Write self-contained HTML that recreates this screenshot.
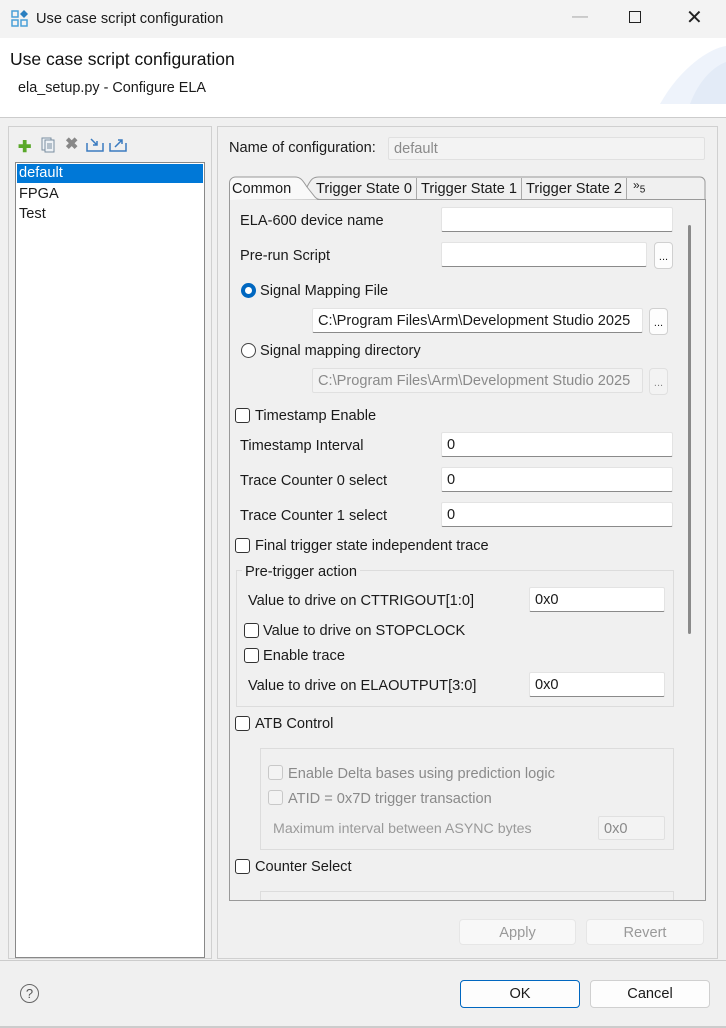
<!DOCTYPE html><html><head><style>
*{box-sizing:border-box}
body{margin:0;width:726px;height:1028px;background:#f0f0f0;font-family:"Liberation Sans",sans-serif;font-size:14.6px;color:#1a1a1a;position:relative;overflow:hidden}
.a{position:absolute;white-space:nowrap}
.in{position:absolute;background:#fff;border:1px solid #e3e3e3;border-bottom:1px solid #8a8a8a;border-radius:2px;padding:4px 5px;font-size:14.6px;line-height:16px;white-space:nowrap;overflow:hidden}
.dis{background:#f3f3f3;color:#8a8a8a;border-color:#e0e0e0}
.btn{position:absolute;background:#fdfdfd;border:1px solid #d0d0d0;border-radius:4px;text-align:center;font-size:14.6px}
.cb{position:absolute;width:15px;height:15px;border:1px solid #333;border-radius:3px;background:#fff}
.cbd{border-color:#c8c8c8;background:#f3f3f3}
.grp{position:absolute;border:1px solid #dcdcdc}
.g{color:#8a8a8a}
</style></head><body>
<div class="a" style="left:0;top:0;width:726px;height:38px;background:#f3f3f3"></div>
<svg class="a" style="left:11px;top:10px" width="18" height="18" viewBox="0 0 18 18"><rect x="1" y="1" width="6" height="6" fill="none" stroke="#4aa0d8" stroke-width="1.5"/><path d="M13 0l4 4-4 4-4-4z" fill="#2a7fc0"/><rect x="1" y="10" width="6" height="6" fill="none" stroke="#4aa0d8" stroke-width="1.5"/><rect x="10" y="10" width="6" height="6" fill="none" stroke="#4aa0d8" stroke-width="1.5"/></svg>
<div class="a" style="left:36px;top:11px;font-size:14.6px">Use case script configuration</div>
<div class="a" style="left:572px;top:8px;color:#aaa;font-size:16px">—</div>
<div class="a" style="left:629px;top:11px;width:12px;height:12px;border:1.5px solid #222"></div>
<div class="a" style="left:686px;top:5px;font-size:20px;color:#222">✕</div>
<div class="a" style="left:0;top:38px;width:726px;height:80px;background:#fff;border-bottom:1px solid #ccc"></div>
<svg class="a" style="left:640px;top:38px" width="86" height="66"><path d="M20 66 C40 30 70 10 86 8 L86 66Z" fill="#eef3fb"/><path d="M50 66 C60 40 75 28 86 24 L86 66Z" fill="#e3ebf7"/></svg>
<div class="a" style="left:10px;top:49px;font-size:17.5px;color:#111">Use case script configuration</div>
<div class="a" style="left:18px;top:80px;font-size:14.4px">ela_setup.py - Configure ELA</div>
<div class="grp" style="left:8px;top:126px;width:204px;height:833px;border-color:#d0d0d0"></div>
<div class="a" style="left:18px;top:137px;font-size:16px;color:#5aa82a;font-weight:bold">✚</div>
<svg class="a" style="left:41px;top:137px" width="15" height="16"><rect x="1" y="1" width="9" height="12" fill="#eef2f6" stroke="#7a8ea0"/><rect x="4" y="3" width="9" height="12" fill="#eef2f6" stroke="#7a8ea0"/><path d="M6 7h5M6 9h5M6 11h5" stroke="#7a8ea0"/></svg>
<div class="a" style="left:65px;top:134px;font-size:16px;color:#888;font-weight:bold">✖</div>
<svg class="a" style="left:86px;top:137px" width="18" height="15"><path d="M1 6v8h16V6" fill="none" stroke="#3a7bc0" stroke-width="1.5"/><path d="M5 2l6 6M11 4v4H7" fill="none" stroke="#3a7bc0" stroke-width="1.5"/></svg>
<svg class="a" style="left:109px;top:137px" width="18" height="15"><path d="M1 6v8h16V6" fill="none" stroke="#3a7bc0" stroke-width="1.5"/><path d="M6 10l7-7M9 3h4v4" fill="none" stroke="#3a7bc0" stroke-width="1.5"/></svg>
<div class="a" style="left:15px;top:162px;width:190px;height:796px;background:#fff;border:1px solid #888"></div>
<div class="a" style="left:17px;top:164px;width:186px;height:19px;background:#0078d7;color:#fff;padding:1px 2px">default</div>
<div class="a" style="left:19px;top:186px">FPGA</div>
<div class="a" style="left:19px;top:206px">Test</div>
<div class="grp" style="left:217px;top:126px;width:501px;height:833px;border-color:#d0d0d0"></div>
<div class="a" style="left:229px;top:140px">Name of configuration:</div>
<div class="in dis" style="left:388px;top:137px;width:317px;height:23px;border-bottom-color:#e0e0e0;padding-top:3px">default</div>
<div class="a" style="left:229px;top:199px;width:477px;height:702px;border:1px solid #999;border-top:none"></div>
<svg class="a" style="left:229px;top:175px" width="477" height="25"><path d="M0 24.5H88M88 24.5H477" stroke="#999"/><path d="M0.5 25V8a6 6 0 0 1 6-6H66c6 0 8 4 12 10l8 10c2 2 3 2.5 6 2.5" fill="#f9f9f9" stroke="#999"/><path d="M78 12c4-8 6-10 12-10H471a5 5 0 0 1 5 5V25" fill="none" stroke="#999"/><path d="M187.5 3v21M292.5 3v21M397.5 3v21" stroke="#aaa"/></svg>
<div class="a" style="left:232px;top:181px">Common</div>
<div class="a" style="left:316px;top:181px">Trigger State 0</div>
<div class="a" style="left:421px;top:181px">Trigger State 1</div>
<div class="a" style="left:526px;top:181px">Trigger State 2</div>
<div class="a" style="left:633px;top:178px;font-size:12px">»<sub style="font-size:10px">5</sub></div>
<div class="a" style="left:688px;top:225px;width:3px;height:409px;background:#8a8a8a;border-radius:2px"></div>
<div class="a" style="left:240px;top:213px">ELA-600 device name</div>
<div class="in" style="left:441px;top:207px;width:232px;height:25px"></div>
<div class="a" style="left:240px;top:248px">Pre-run Script</div>
<div class="in" style="left:441px;top:242px;width:206px;height:25px"></div>
<div class="btn" style="left:654px;top:242px;width:19px;height:27px;font-size:11px;line-height:28px">...</div>
<div class="a" style="left:241px;top:283px;width:15px;height:15px;border-radius:50%;background:#0067c0"><div style="margin:4px;width:7px;height:7px;border-radius:50%;background:#fff"></div></div>
<div class="a" style="left:260px;top:283px">Signal Mapping File</div>
<div class="in" style="left:312px;top:308px;width:331px;height:25px">C:\Program Files\Arm\Development Studio 2025</div>
<div class="btn" style="left:649px;top:308px;width:19px;height:27px;font-size:11px;line-height:28px">...</div>
<div class="a" style="left:241px;top:343px;width:15px;height:15px;border-radius:50%;border:1px solid #444;background:#fff"></div>
<div class="a" style="left:260px;top:343px">Signal mapping directory</div>
<div class="in dis" style="left:312px;top:368px;width:331px;height:25px">C:\Program Files\Arm\Development Studio 2025</div>
<div class="btn g" style="left:649px;top:368px;width:19px;height:27px;font-size:11px;line-height:28px;background:#f3f3f3;border-color:#e0e0e0">...</div>
<div class="cb" style="left:235px;top:408px"></div>
<div class="a" style="left:255px;top:408px">Timestamp Enable</div>
<div class="a" style="left:240px;top:438px">Timestamp Interval</div>
<div class="in" style="left:441px;top:432px;width:232px;height:25px">0</div>
<div class="a" style="left:240px;top:473px">Trace Counter 0 select</div>
<div class="in" style="left:441px;top:467px;width:232px;height:25px">0</div>
<div class="a" style="left:240px;top:508px">Trace Counter 1 select</div>
<div class="in" style="left:441px;top:502px;width:232px;height:25px">0</div>
<div class="cb" style="left:235px;top:538px"></div>
<div class="a" style="left:255px;top:538px">Final trigger state independent trace</div>
<div class="grp" style="left:236px;top:570px;width:438px;height:137px"></div>
<div class="a" style="left:242px;top:564px;background:#f0f0f0;padding:0 3px">Pre-trigger action</div>
<div class="a" style="left:248px;top:593px">Value to drive on CTTRIGOUT[1:0]</div>
<div class="in" style="left:529px;top:587px;width:136px;height:25px">0x0</div>
<div class="cb" style="left:244px;top:623px"></div>
<div class="a" style="left:263px;top:623px">Value to drive on STOPCLOCK</div>
<div class="cb" style="left:244px;top:648px"></div>
<div class="a" style="left:263px;top:648px">Enable trace</div>
<div class="a" style="left:248px;top:678px">Value to drive on ELAOUTPUT[3:0]</div>
<div class="in" style="left:529px;top:672px;width:136px;height:25px">0x0</div>
<div class="cb" style="left:235px;top:716px"></div>
<div class="a" style="left:255px;top:716px">ATB Control</div>
<div class="grp" style="left:260px;top:748px;width:414px;height:102px"></div>
<div class="cb cbd" style="left:268px;top:765px"></div>
<div class="a g" style="left:288px;top:766px">Enable Delta bases using prediction logic</div>
<div class="cb cbd" style="left:268px;top:790px"></div>
<div class="a g" style="left:288px;top:791px">ATID = 0x7D trigger transaction</div>
<div class="a g" style="left:273px;top:821px;font-size:14.2px;color:#9a9a9a">Maximum interval between ASYNC bytes</div>
<div class="in dis" style="left:598px;top:816px;width:67px;height:24px;border-bottom-color:#e0e0e0">0x0</div>
<div class="cb" style="left:235px;top:859px"></div>
<div class="a" style="left:255px;top:859px">Counter Select</div>
<div class="a" style="left:260px;top:891px;width:414px;height:9px;border:1px solid #dcdcdc;border-bottom:none"></div>
<div class="btn g" style="left:459px;top:919px;width:117px;height:26px;line-height:26px;background:#f8f8f8;border-color:#e6e6e6;color:#999">Apply</div>
<div class="btn g" style="left:586px;top:919px;width:118px;height:26px;line-height:26px;background:#f8f8f8;border-color:#e6e6e6;color:#999">Revert</div>
<div class="a" style="left:0;top:960px;width:726px;height:1px;background:#ccc"></div>
<div class="a" style="left:20px;top:984px;width:19px;height:19px;border:1.5px solid #666;border-radius:50%;text-align:center;font-size:13px;line-height:17px;color:#555">?</div>
<div class="btn" style="left:460px;top:980px;width:120px;height:28px;line-height:27px;border-color:#0067c0">OK</div>
<div class="btn" style="left:590px;top:980px;width:120px;height:28px;line-height:27px">Cancel</div>
<div class="a" style="left:0;top:1026px;width:726px;height:2px;background:#ccc"></div>
</body></html>
